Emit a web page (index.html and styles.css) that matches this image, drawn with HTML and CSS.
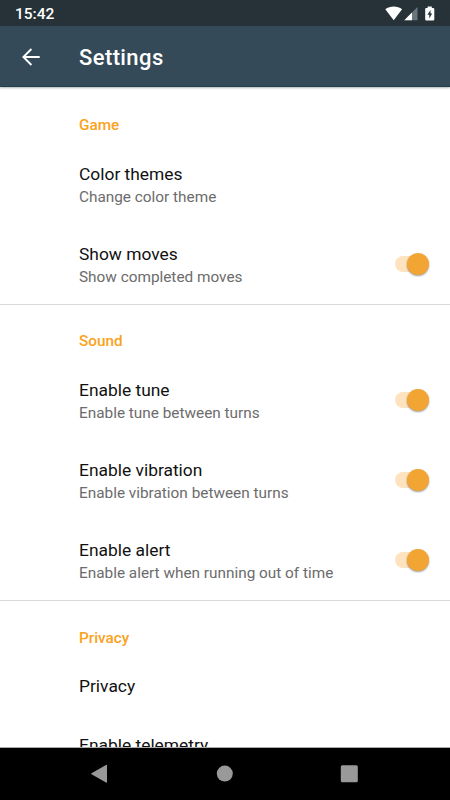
FILE: index.html
```html
<!DOCTYPE html>
<html lang="en">
<head>
<meta charset="utf-8">
<title>Settings</title>
<link rel="stylesheet" href="styles.css">
</head>
<body>
<div class="screen">
  <header class="top">
    <div class="status">
      <span class="clock">15:42</span>
      <svg class="status-icons" width="52" height="16" viewBox="0 0 52 16">
        <path d="M0.300 3.300C5 -.3 12.500 -.3 17.100 3.300L8.700 14.200Z" fill="#fff"/>
        <path d="M32.500 1V14.300H19.300Z" fill="#69777b"/>
        <path d="M27 6.500V14.300H19.300Z" fill="#fff"/>
        <path d="M42.600 1.900V.500H46.800V1.900H48Q49.300 1.900 49.300 2.900V13.300Q49.300 14.500 48.200 14.500H41.300Q40.200 14.500 40.200 13.300V2.900Q40.200 1.900 41.300 1.900Z" fill="#fff"/>
        <path d="M45.500 4L42.400 8.800H44.300V12.400L47.200 7.500H45.500Z" fill="#263238"/>
      </svg>
    </div>
    <div class="appbar">
      <svg class="back" width="20" height="20" viewBox="0 0 20 20" fill="none" stroke="#fff" stroke-width="1.900"><path d="M18.700 10H2.500M10.400 2L2.400 10L10.400 18"/></svg>
      <h1>Settings</h1>
    </div>
  </header>
  <main class="list">
    <section>
      <h2>Game</h2>
      <div class="row"><div><div class="name">Color themes</div><div class="note">Change color theme</div></div></div>
      <div class="row"><div><div class="name">Show moves</div><div class="note">Show completed moves</div></div><span class="switch"></span></div>
    </section>
    <section>
      <h2>Sound</h2>
      <div class="row"><div><div class="name">Enable tune</div><div class="note">Enable tune between turns</div></div><span class="switch"></span></div>
      <div class="row"><div><div class="name">Enable vibration</div><div class="note">Enable vibration between turns</div></div><span class="switch"></span></div>
      <div class="row"><div><div class="name">Enable alert</div><div class="note">Enable alert when running out of time</div></div><span class="switch"></span></div>
    </section>
    <section>
      <h2>Privacy</h2>
      <div class="row single"><div class="name">Privacy</div></div>
      <div class="row last"><div class="name">Enable telemetry</div></div>
    </section>
  </main>
  <nav class="navbar">
    <svg width="450" height="52" viewBox="0 0 450 52" fill="#999">
      <path d="M107 17.500V34Q107 35.200 106 34.600L91.500 26.200Q90.800 25.700 91.500 25.200L106 17Q107 16.400 107 17.500Z"/>
      <circle cx="224.800" cy="25.600" r="8"/>
      <rect x="340.800" y="17.200" width="17" height="17" rx="1.500"/>
    </svg>
  </nav>
</div>
</body>
</html>
```
FILE: styles.css
```css
* { box-sizing: border-box; }
body { margin: 0; background: #fff; font-family: Roboto, sans-serif; }
.screen { width: 450px; height: 800px; display: flex; flex-direction: column; overflow: hidden; }
.top { flex: none; height: 87px; background: #354a58; box-shadow: 0 1px 2px rgba(0,0,0,.3); border-bottom: 1px solid #1e4150; z-index: 1; }
.status { height: 26px; background: #263238; color: #fff; display: flex; align-items: center; justify-content: space-between; padding: 0 13px 0 15px; }
.clock { font-size: 15.500px; font-weight: 500; line-height: 26px; padding-top: 2px; }
.status-icons { display: block; margin-top: 1px; }
.appbar { height: 60px; display: flex; align-items: center; padding: 2px 21px 0; color: #fff; }
.back { display: block; margin-right: 38px; }
h1 { margin: 0; padding-top: 2px; font-size: 22px; font-weight: 500; letter-spacing: .4px; line-height: 28px; }
.list { flex: 1; min-height: 0; overflow: hidden; padding-top: 1px; }
section + section { border-top: 1px solid #d9d9d9; }
h2 { margin: 0; height: 56px; padding: 27px 0 0 79px; font-size: 15.300px; line-height: 20px; font-weight: 500; color: #fba21c; }
section + section h2 { height: 55px; padding-top: 26px; }
section:last-child h2 { padding-top: 27px; }
.row { height: 80px; padding: 3px 21px 0 79px; display: flex; align-items: center; justify-content: space-between; }
.name { font-size: 17.400px; line-height: 22px; color: #111; }
.note { padding-top: 1px; font-size: 15.350px; line-height: 22px; color: #6c6c6c; }
.single { height: 59px; padding-top: 1px; }
.last { align-items: flex-start; padding-top: 19px; }
.switch { position: relative; width: 34.500px; height: 22px; margin-top: -3px; display: flex; align-items: center; justify-content: flex-end; }
.switch::before { content: ""; position: absolute; left: 0; top: 3px; width: 30px; height: 16px; border-radius: 8px; background: #fde3c0; }
.switch::after { content: ""; position: relative; width: 22px; height: 22px; border-radius: 50%; background: #f3a533; box-shadow: 0 1px 2px rgba(0,0,0,.4); }
.navbar { flex: none; height: 53px; background: #000; border-top: 1px solid #aaa; }
.navbar svg { display: block; }
```
